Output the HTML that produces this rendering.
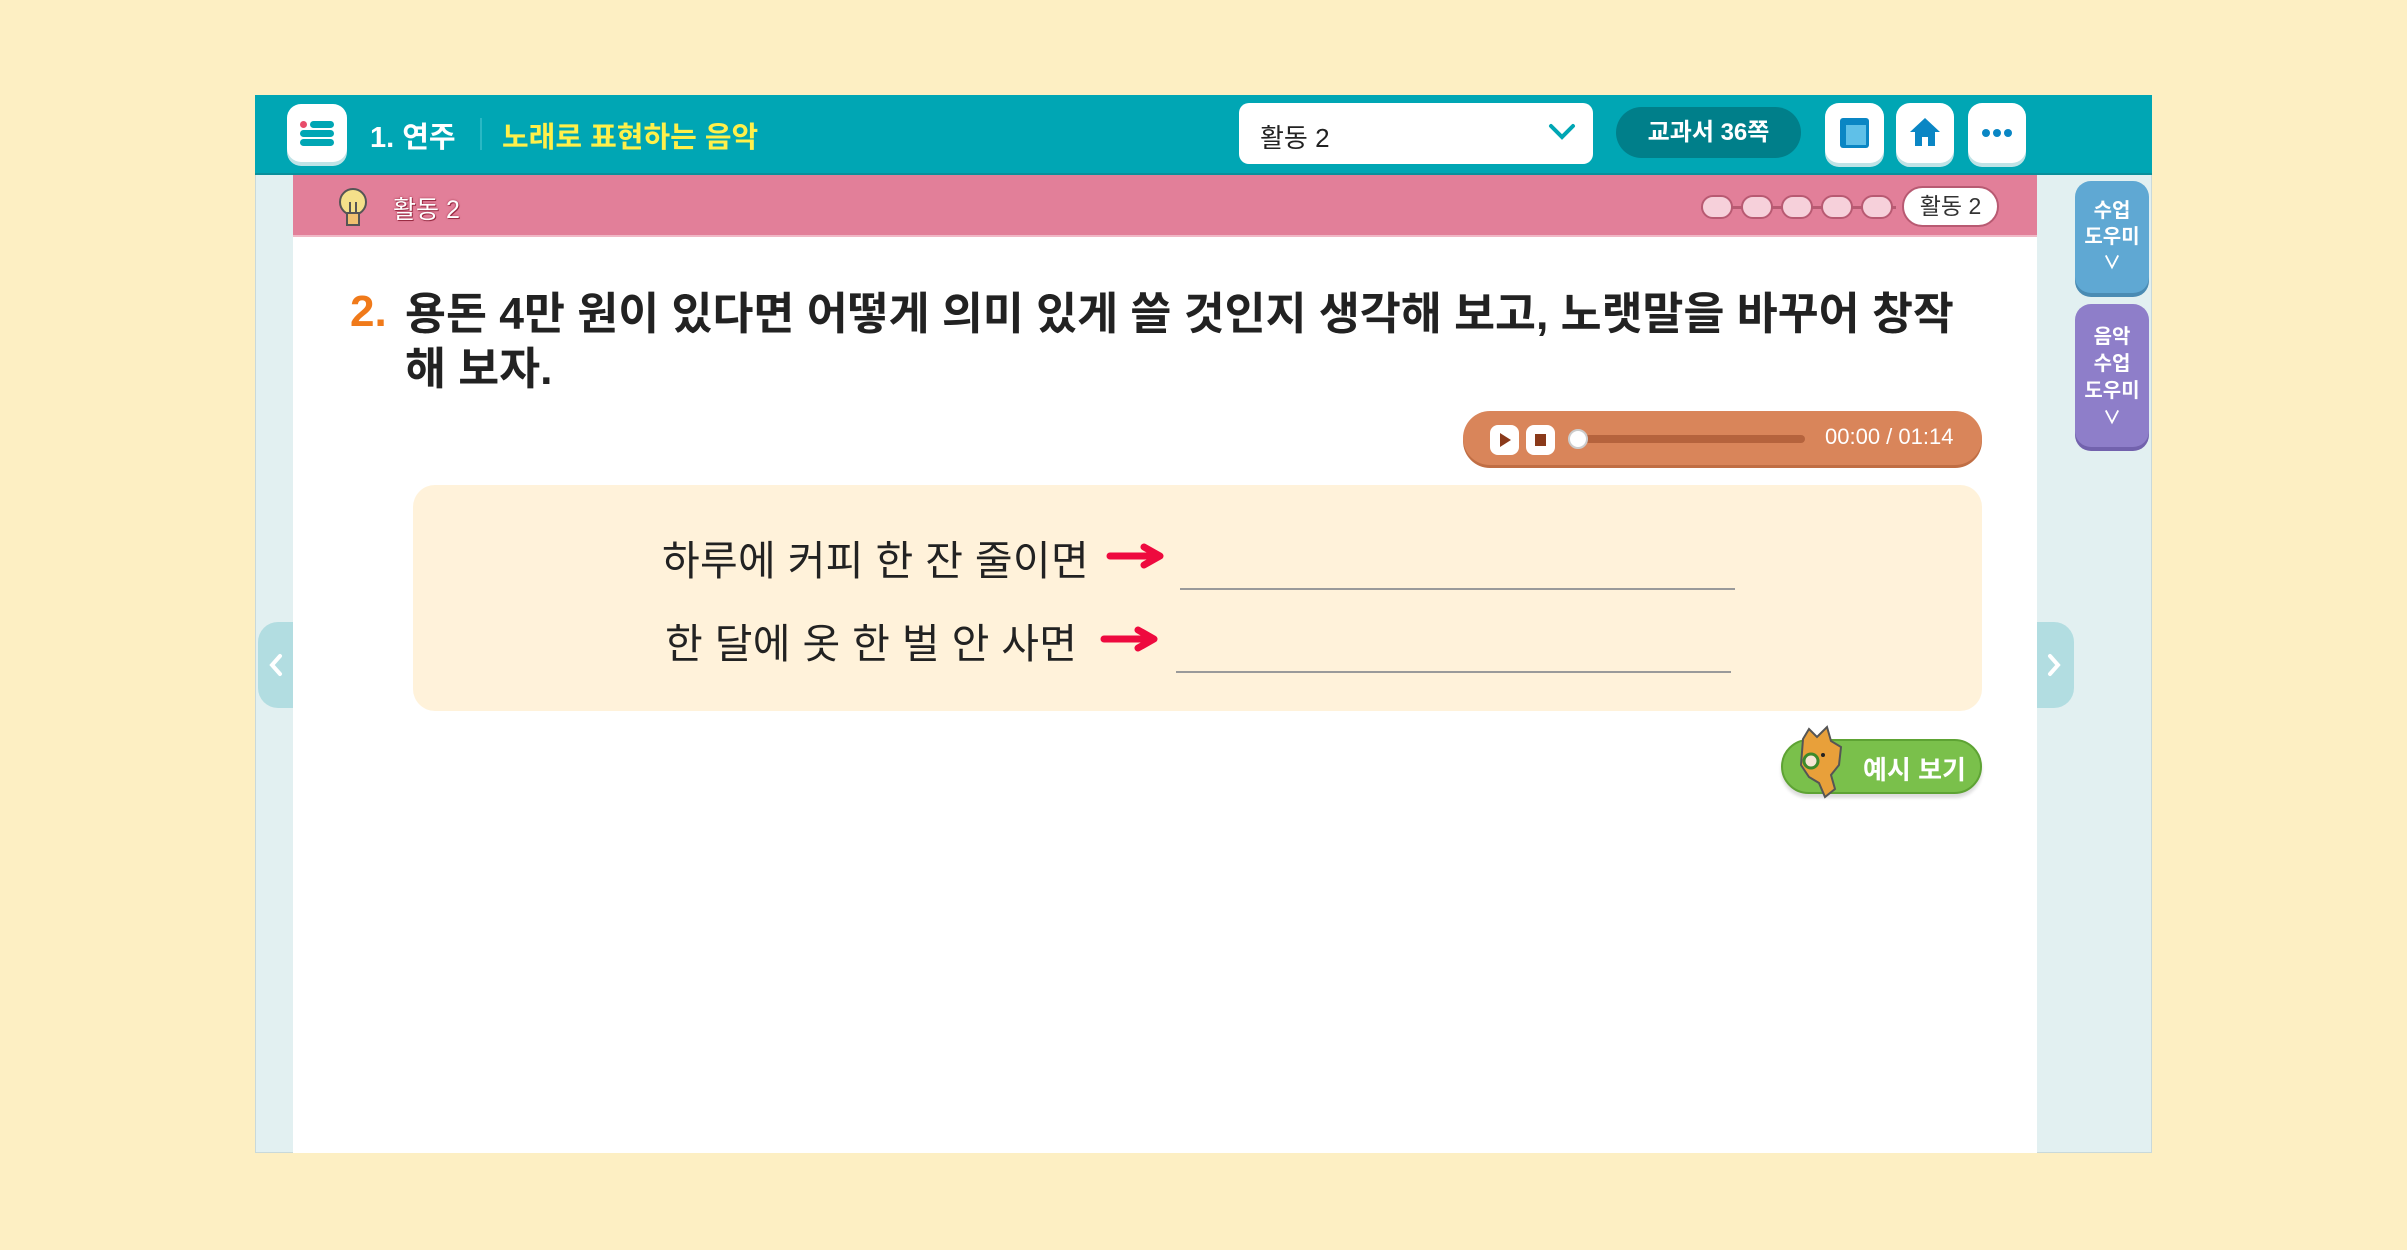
<!DOCTYPE html>
<html><head><meta charset="utf-8"><style>
*{margin:0;padding:0;box-sizing:border-box}
body{width:2407px;height:1250px;background:#fdefc3;position:relative;overflow:hidden;font-family:"Liberation Sans","Noto Sans CJK KR",sans-serif}
.a{position:absolute}
.frame{left:255px;top:95px;width:1897px;height:1058px;background:#e2f0f1;border:1px solid #c9d9da}
.hdr{left:255px;top:95px;width:1897px;height:80px;background:#00a6b4;border-bottom:2px solid #0a8f9b}
.btn{background:#fff;border-radius:14px;box-shadow:0 4px 0 #bfe3e6}
.panel{left:293px;top:175px;width:1744px;height:978px;background:#fff}
.pink{left:293px;top:175px;width:1744px;height:62px;background:#e27f99;border-bottom:2px solid #f0b8c6}
.t{white-space:nowrap}
</style></head><body>
<div class="a frame"></div>
<div class="a hdr"></div>
<div class="a btn" style="left:287px;top:104px;width:60px;height:58px">
 <div class="a" style="left:13px;top:17px;width:7px;height:7px;border-radius:50%;background:#e84c6a"></div>
 <div class="a" style="left:23px;top:17px;width:24px;height:7px;border-radius:4px;background:#00a6b4"></div>
 <div class="a" style="left:13px;top:26px;width:34px;height:7px;border-radius:4px;background:#00a6b4"></div>
 <div class="a" style="left:13px;top:35px;width:34px;height:7px;border-radius:4px;background:#00a6b4"></div>
</div>
<div class="a t" style="left:370px;top:114px;font-size:29px;font-weight:bold;color:#fff">1. 연주</div>
<div class="a" style="left:480px;top:118px;width:2px;height:32px;background:#2ab8c4"></div>
<div class="a t" style="left:502px;top:114px;font-size:29px;font-weight:bold;color:#fff04a">노래로 표현하는 음악</div>
<div class="a" style="left:1239px;top:103px;width:354px;height:61px;background:#fff;border-radius:10px"></div>
<div class="a t" style="left:1260px;top:118px;font-size:26px;color:#222">활동 2</div>
<svg class="a" style="left:1548px;top:122px" width="28" height="20"><path d="M3 4 L14 15 L25 4" stroke="#00a6b4" stroke-width="4" fill="none" stroke-linecap="round"/></svg>
<div class="a t" style="left:1616px;top:107px;width:185px;height:51px;border-radius:26px;background:#007f8a;color:#fff;font-size:24px;font-weight:bold;text-align:center;line-height:51px">교과서 36쪽</div>
<div class="a btn" style="left:1825px;top:103px;width:59px;height:60px"><div class="a" style="left:15px;top:15px;width:29px;height:30px;background:#0a86c4;border-radius:3px"></div><div class="a" style="left:21px;top:22px;width:20px;height:20px;background:#5fc0e8"></div></div>
<div class="a btn" style="left:1896px;top:103px;width:58px;height:60px"><svg class="a" style="left:13px;top:13px" width="32" height="32"><path d="M16 2 L31 16 H26 V30 H19 V21 H13 V30 H6 V16 H1 Z" fill="#0a86c4"/></svg></div>
<div class="a btn" style="left:1968px;top:103px;width:58px;height:60px"><div class="a" style="left:14px;top:26px;font-size:0"><span style="display:inline-block;width:8px;height:8px;border-radius:50%;background:#0a86c4;margin-right:3px"></span><span style="display:inline-block;width:8px;height:8px;border-radius:50%;background:#0a86c4;margin-right:3px"></span><span style="display:inline-block;width:8px;height:8px;border-radius:50%;background:#0a86c4"></span></div></div>
<div class="a panel"></div>
<div class="a pink"></div>
<svg class="a" style="left:336px;top:187px" width="34" height="42"><circle cx="17" cy="15" r="13" fill="#f4e08a" stroke="#555" stroke-width="2"/><rect x="11" y="26" width="12" height="12" fill="#f0c070" stroke="#555" stroke-width="2"/><path d="M14 26 V15 M20 26 V15" stroke="#555" stroke-width="2"/></svg>
<div class="a t" style="left:393px;top:190px;font-size:25px;color:#fff;text-shadow:0 0 2px #9a2c44,1px 1px 0 #9a2c44">활동 2</div>
<div class="a" style="left:1701px;width:195px;height:3px;top:206px;background:#b85a72"></div>
<div class="a" style="left:1701px;top:195px;width:32px;height:24px;border-radius:12px;background:#f6d0da;border:2px solid #b85a72"></div>
<div class="a" style="left:1741px;top:195px;width:32px;height:24px;border-radius:12px;background:#f6d0da;border:2px solid #b85a72"></div>
<div class="a" style="left:1781px;top:195px;width:32px;height:24px;border-radius:12px;background:#f6d0da;border:2px solid #b85a72"></div>
<div class="a" style="left:1821px;top:195px;width:32px;height:24px;border-radius:12px;background:#f6d0da;border:2px solid #b85a72"></div>
<div class="a" style="left:1861px;top:195px;width:32px;height:24px;border-radius:12px;background:#f6d0da;border:2px solid #b85a72"></div>
<div class="a t" style="left:1902px;top:186px;width:97px;height:41px;border-radius:21px;background:#fff;border:2px solid #b85a72;text-align:center;line-height:37px;font-size:23px;color:#333">활동 2</div>
<div class="a t" style="left:350px;top:287px;font-size:44px;font-weight:bold;color:#f07a1a">2.</div>
<div class="a" style="left:405px;top:287px;font-size:44.5px;font-weight:bold;color:#222;line-height:55px;width:1600px">용돈 4만 원이 있다면 어떻게 의미 있게 쓸 것인지 생각해 보고, 노랫말을 바꾸어 창작<br>해 보자.</div>
<div class="a" style="left:1463px;top:411px;width:519px;height:54px;border-radius:27px;background:#d9855a;box-shadow:0 3px 0 #c06e44"></div>
<div class="a" style="left:1490px;top:425px;width:29px;height:30px;border-radius:8px;background:#fff"><div class="a" style="left:10px;top:8px;border-left:11px solid #8a3a1a;border-top:7px solid transparent;border-bottom:7px solid transparent"></div></div>
<div class="a" style="left:1526px;top:425px;width:29px;height:30px;border-radius:8px;background:#fff"><div class="a" style="left:9px;top:9px;width:11px;height:12px;background:#8a3a1a"></div></div>
<div class="a" style="left:1580px;top:435px;width:225px;height:8px;border-radius:4px;background:#b5633d"></div>
<div class="a" style="left:1568px;top:429px;width:20px;height:20px;border-radius:50%;background:#fff;border:2px solid #ccc"></div>
<div class="a t" style="left:1825px;top:424px;font-size:22px;color:#fff">00:00 / 01:14</div>
<div class="a" style="left:413px;top:485px;width:1569px;height:226px;border-radius:22px;background:#fff2da"></div>
<div class="a t" style="left:662px;top:527px;font-size:41px;color:#222;letter-spacing:0.3px">하루에 커피 한 잔 줄이면</div>
<div class="a t" style="left:665px;top:610px;font-size:41px;color:#222;letter-spacing:0.3px">한 달에 옷 한 벌 안 사면</div>
<svg class="a" style="left:1106px;top:541px" width="60" height="30"><path d="M4 15 H48 M38 6 L54 15 L38 24" stroke="#ee0a3e" stroke-width="7" fill="none" stroke-linecap="round" stroke-linejoin="round"/></svg>
<svg class="a" style="left:1100px;top:624px" width="60" height="30"><path d="M4 15 H48 M38 6 L54 15 L38 24" stroke="#ee0a3e" stroke-width="7" fill="none" stroke-linecap="round" stroke-linejoin="round"/></svg>
<div class="a" style="left:1180px;top:588px;width:555px;height:2px;background:#9a9a9a"></div>
<div class="a" style="left:1176px;top:671px;width:555px;height:2px;background:#9a9a9a"></div>
<div class="a" style="left:1781px;top:739px;width:201px;height:55px;border-radius:28px;background:#7ac04b;border:2px solid #5ea334;box-shadow:0 4px 3px #ddd"></div>
<svg class="a" style="left:1795px;top:725px" width="60" height="75"><path d="M8 14 L14 4 L22 12 L32 2 L36 16 L46 22 L44 40 L36 50 L40 64 L30 72 L24 58 L14 52 L6 40 Z" fill="#e8a03a" stroke="#555" stroke-width="2"/><circle cx="16" cy="36" r="7" fill="#f6e6d4" stroke="#3c8a2a" stroke-width="3"/><circle cx="28" cy="30" r="2" fill="#222"/></svg>
<div class="a t" style="left:1863px;top:750px;font-size:26px;font-weight:bold;color:#fff">예시 보기</div>
<div class="a" style="left:258px;top:622px;width:35px;height:86px;border-radius:20px 0 0 20px;background:#b2dde1"></div>
<svg class="a" style="left:266px;top:652px" width="20" height="26"><path d="M14 4 L6 13 L14 22" stroke="#fff" stroke-width="4" fill="none" stroke-linecap="round"/></svg>
<div class="a" style="left:2037px;top:622px;width:37px;height:86px;border-radius:0 20px 20px 0;background:#b2dde1"></div>
<svg class="a" style="left:2044px;top:652px" width="20" height="26"><path d="M6 4 L14 13 L6 22" stroke="#fff" stroke-width="4" fill="none" stroke-linecap="round"/></svg>
<div class="a" style="left:2075px;top:181px;width:74px;height:112px;border-radius:16px;background:#5fa8d3;box-shadow:0 4px 0 #4a8bb3;text-align:center;color:#fff;font-size:20px;font-weight:bold;line-height:26px;padding-top:17px">수업<br>도우미<br><span style="font-size:18px">∨</span></div>
<div class="a" style="left:2075px;top:304px;width:74px;height:143px;border-radius:16px;background:#8e7ec9;box-shadow:0 4px 0 #7262ad;text-align:center;color:#fff;font-size:20px;font-weight:bold;line-height:27px;padding-top:20px">음악<br>수업<br>도우미<br><span style="font-size:18px">∨</span></div>
</body></html>
